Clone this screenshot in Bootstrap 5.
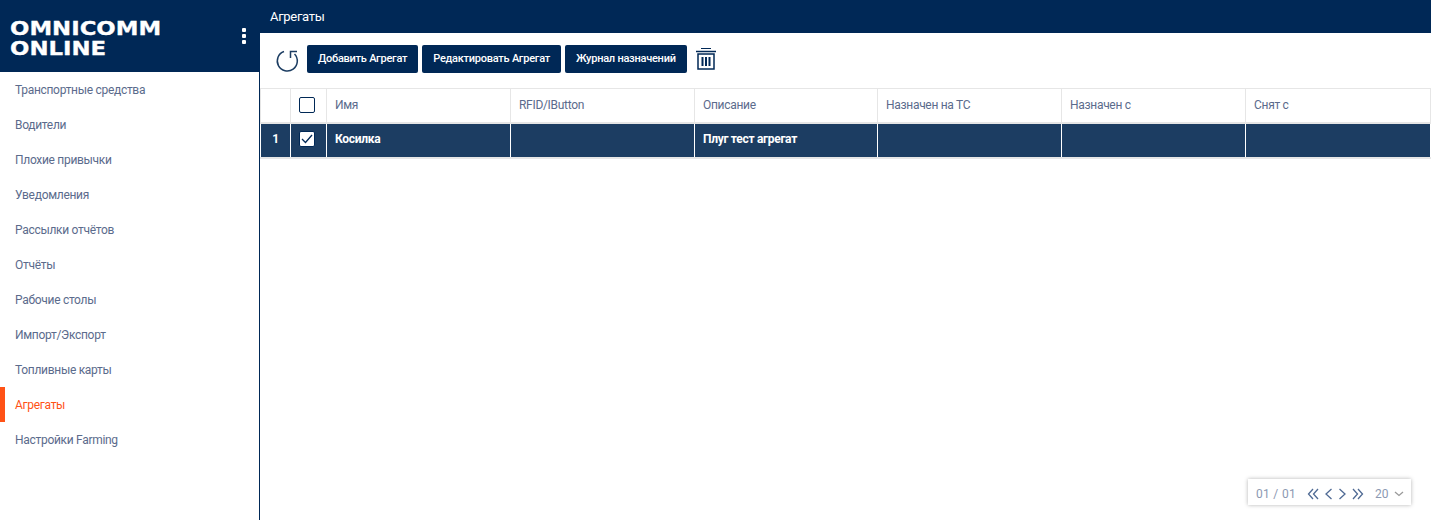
<!DOCTYPE html>
<html lang="ru">
<head>
  <meta charset="utf-8" />
  <meta name="viewport" content="width=device-width, initial-scale=1" />
  <title>Агрегаты</title>
  <link href="https://cdn.jsdelivr.net/npm/bootstrap@5.3.3/dist/css/bootstrap.min.css" rel="stylesheet">
  <style>
    html, body { height: 520px; overflow: hidden; }
    body { font-family: Roboto, "Liberation Sans", sans-serif; font-size: 12px; color: #5b6b8c; background: #fff; }
    .app-shell { height: 520px; }
    .side-panel { width: 260px; flex: none; border-right: 1px solid #002856; }
    .logo-box { height: 72px; background: #002856; padding: 18px 11px 0 10px; }
    .logo-text { font-family: "DejaVu Sans", sans-serif; font-weight: 700; font-size: 19px; line-height: 20px; color: #fff; -webkit-text-stroke: .3px #fff; transform: scaleX(1.2); transform-origin: left top; }
    .logo-dots { width: 4px; margin-top: 10px; margin-right: 2px; }
    .logo-dots span { display: block; width: 4px; height: 4px; background: #fff; border-radius: 1px; margin-bottom: 2px; }
    .side-link { height: 35px; line-height: 37px; padding-left: 15px; color: #5b6b8c; text-decoration: none; display: block; letter-spacing: -.3px; }
    .side-link.is-active { color: #ff5216; border-left: 5px solid #ff5216; padding-left: 10px; }
    .top-title { height: 33px; line-height: 33px; background: #002856; color: #fff; padding-left: 10px; font-size: 13px; letter-spacing: -.3px; }
    .tool-row { height: 55px; padding: 12px 0 0 15px; }
    .tool-btn { height: 28px; width: auto; padding: 0 11px; background: #002856; border: 0; border-radius: 2px; color: #fff; font-weight: 500; font-size: 11px; margin-right: 4px; letter-spacing: -.25px; }
    .grid-table { table-layout: fixed; width: 1170px; margin: 0; border-collapse: collapse; }
    .grid-table th, .grid-table td { height: 35px; padding: 0 8px; vertical-align: middle; border: 1px solid #e6e6e6; font-size: 12px; letter-spacing: -.3px; }
    .grid-table th { height: 34px; font-weight: 400; color: #5b6b8c; background: #fff; border-bottom-width: 2px; padding-bottom: 1px; }
    .grid-table .row-picked td { background: #1c3d62; color: #fff; font-weight: 700; border-color: #fff; border-bottom: 2px solid #e6e6e6; border-top: 0; padding-bottom: 3px; }
    .tick-box { width: 16px; height: 16px; border: 1.5px solid #002856; border-radius: 2px; display: block; background: #fff; }
    .pager-row { flex: 1; padding: 0 20px 15px 0; }
    .pager-box { width: 163px; height: 26px; box-shadow: 0 0 4px rgba(0, 0, 0, .3); color: #8c99b2; padding: 4px 4px 0 8px; gap: 5px; white-space: nowrap; }
    .pager-box svg { flex: none; }
    .pager-count { margin-right: 6px; letter-spacing: .3px; flex: none; }
    .pager-size { margin-left: 6px; margin-right: 1px; }
  </style>
</head>
<body>
  <div class="app-shell d-flex">
    <aside class="side-panel d-flex flex-column">
      <div class="logo-box d-flex justify-content-between">
        <div class="logo-text">OMNICOMM<br>ONLINE</div>
        <div class="logo-dots"><span></span><span></span><span></span></div>
      </div>
      <nav>
        <a class="side-link" href="#">Транспортные средства</a>
        <a class="side-link" href="#">Водители</a>
        <a class="side-link" href="#">Плохие привычки</a>
        <a class="side-link" href="#">Уведомления</a>
        <a class="side-link" href="#">Рассылки отчётов</a>
        <a class="side-link" href="#">Отчёты</a>
        <a class="side-link" href="#">Рабочие столы</a>
        <a class="side-link" href="#">Импорт/Экспорт</a>
        <a class="side-link" href="#">Топливные карты</a>
        <a class="side-link is-active" href="#">Агрегаты</a>
        <a class="side-link" href="#">Настройки Farming</a>
      </nav>
    </aside>
    <main class="flex-grow-1 d-flex flex-column">
      <div class="top-title">Агрегаты</div>
      <div class="tool-row d-flex align-items-start">
        <svg class="me-2" width="24" height="28" viewBox="0 0 24 28" fill="none" stroke="#1c3d62" stroke-width="1.500"><path d="M9 6.500A10 10 0 1 0 19.500 9"/><path d="M22 6.500H15.500V13"/></svg>
        <button class="tool-btn" type="button">Добавить Агрегат</button>
        <button class="tool-btn" type="button">Редактировать Агрегат</button>
        <button class="tool-btn" type="button">Журнал назначений</button>
        <svg class="ms-1" width="22" height="26" viewBox="0 0 22 26" fill="none" stroke="#002856"><path d="M6 3.500h10" stroke-width="1"/><path d="M1 6.500h20" stroke-width="1.500"/><path d="M3 9v15h16V9z" stroke-width="1.500"/><path d="M7.500 12v9M11 12v9M14.500 12v9" stroke-width="2"/></svg>
      </div>
      <table class="table grid-table">
        <colgroup><col style="width:30px"><col style="width:36px"><col style="width:184px"><col style="width:184px"><col style="width:183px"><col style="width:184px"><col style="width:184px"><col style="width:185px"></colgroup>
        <thead>
          <tr>
            <th></th>
            <th><span class="tick-box"></span></th>
            <th>Имя</th><th>RFID/IButton</th><th>Описание</th><th>Назначен на ТС</th><th>Назначен с</th><th>Снят с</th>
          </tr>
        </thead>
        <tbody>
          <tr class="row-picked">
            <td class="text-center">1</td>
            <td><span class="tick-box d-flex align-items-center justify-content-center"><svg width="12" height="10" viewBox="0 0 12 10" fill="none" stroke="#002856" stroke-width="1.300"><path d="M1 5l3.500 3.500L11 1"/></svg></span></td>
            <td>Косилка</td><td></td><td>Плуг тест агрегат</td><td></td><td></td><td></td>
          </tr>
        </tbody>
      </table>
      <div class="pager-row d-flex justify-content-end align-items-end">
        <div class="pager-box d-flex align-items-center">
          <span class="pager-count">01 / 01</span>
          <svg width="12" height="12" viewBox="0 0 12 12" fill="none" stroke="#4f6a94" stroke-width="1.300"><path d="M6 1 1.500 6 6 11M11 1 6.500 6 11 11"/></svg>
          <svg width="9" height="12" viewBox="0 0 9 12" fill="none" stroke="#4f6a94" stroke-width="1.300"><path d="M7.500 1 2 6l5.500 5"/></svg>
          <svg width="9" height="12" viewBox="0 0 9 12" fill="none" stroke="#4f6a94" stroke-width="1.300"><path d="M1.500 1 7 6l-5.500 5"/></svg>
          <svg width="12" height="12" viewBox="0 0 12 12" fill="none" stroke="#4f6a94" stroke-width="1.300"><path d="M1 1l4.500 5L1 11M6 1l4.500 5L6 11"/></svg>
          <span class="pager-size">20</span>
          <svg width="10" height="6" viewBox="0 0 10 6" fill="none" stroke="#9a9a9a" stroke-width="1.300"><path d="M1 1l4 3.500L9 1"/></svg>
        </div>
      </div>
    </main>
  </div>
  <script src="https://cdn.jsdelivr.net/npm/bootstrap@5.3.3/dist/js/bootstrap.bundle.min.js"></script>
</body>
</html>
